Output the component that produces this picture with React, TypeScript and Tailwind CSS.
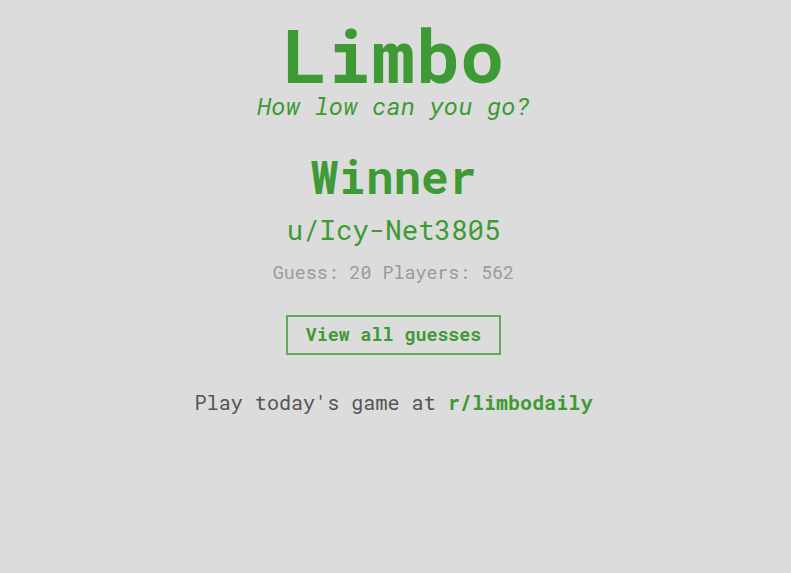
const mono = "font-['Roboto_Mono','DejaVu_Sans_Mono','Liberation_Mono',monospace]";

export default function App() {
  return (
    <div className={`min-h-[573px] w-full bg-[#dcdcdc] ${mono}`}>
      <div className="flex flex-col items-center pr-[4px] pt-[17px]">
        <h1 className="text-[74px] font-bold leading-[74px] text-[#3d9a34]">Limbo</h1>
        <p className="mt-[1px] text-[24.5px] italic leading-[28px] text-[#3d9a34]">How low can you go?</p>

        <h2 className="mt-[30px] text-[46px] font-bold leading-[52px] text-[#3d9a34]">Winner</h2>
        <div className="mt-[10px] text-[27.4px] leading-[34px] text-[#3d9a34]">u/Icy-Net3805</div>
        <div className="mt-[14px] text-[18.3px] leading-[24px] text-[#9a9a9a]">Guess: 20 Players: 562</div>

        <button className="mt-[31px] h-[40px] w-[215px] border-2 border-[#62a95a] text-[18.3px] font-bold text-[#3d9a34]">
          View all guesses
        </button>

        <p className="mt-[33px] text-[20.1px] leading-[28px] text-[#555555]">
          Play today's game at <span className="font-bold text-[#3d9a34]">r/limbodaily</span>
        </p>
      </div>
    </div>
  );
}
